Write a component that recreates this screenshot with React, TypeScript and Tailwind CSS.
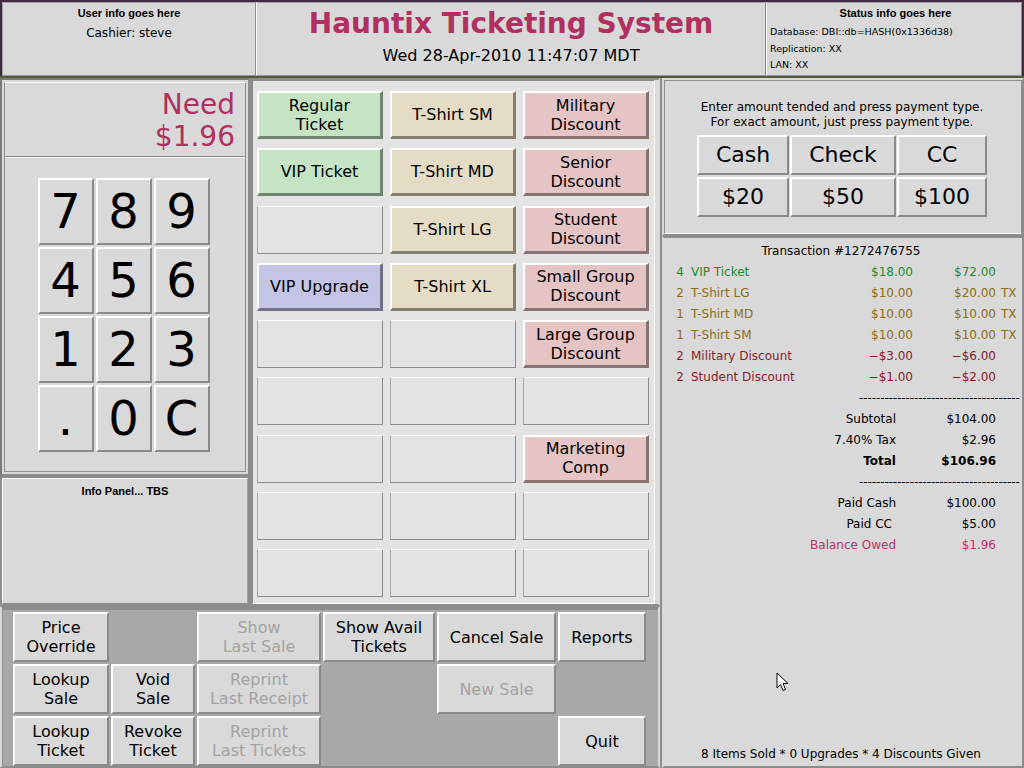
import React from "react";

const keyBtn =
  "flex items-center justify-center bg-[#d9d9d9] border-2 border-t-white border-l-white border-b-[#8a8a8a] border-r-[#8a8a8a]";

type Prod = { label?: string; kind?: "green" | "tan" | "pink" | "blue" };

const products: Prod[][] = [
  [{ label: "Regular\nTicket", kind: "green" }, { label: "T-Shirt SM", kind: "tan" }, { label: "Military\nDiscount", kind: "pink" }],
  [{ label: "VIP Ticket", kind: "green" }, { label: "T-Shirt MD", kind: "tan" }, { label: "Senior\nDiscount", kind: "pink" }],
  [{}, { label: "T-Shirt LG", kind: "tan" }, { label: "Student\nDiscount", kind: "pink" }],
  [{ label: "VIP Upgrade", kind: "blue" }, { label: "T-Shirt XL", kind: "tan" }, { label: "Small Group\nDiscount", kind: "pink" }],
  [{}, {}, { label: "Large Group\nDiscount", kind: "pink" }],
  [{}, {}, {}],
  [{}, {}, { label: "Marketing\nComp", kind: "pink" }],
  [{}, {}, {}],
  [{}, {}, {}],
];

function ProductButton({ p }: { p: Prod }) {
  if (!p.label) {
    return (
      <div className="bg-[#e3e3e3] border border-[#8c8c8c] border-t-white border-l-[#a8a8a8]" />
    );
  }
  const cls =
    p.kind === "green"
      ? "bg-[#c4e4c4] border-b-[#748474] border-r-[#748474]"
      : p.kind === "tan"
      ? "bg-[#e4dcc4] border-b-[#848070] border-r-[#848070]"
      : p.kind === "blue"
      ? "bg-[#c4c4e4] border-b-[#707088] border-r-[#707088]"
      : "bg-[#e4c4c4] border-b-[#887474] border-r-[#887474]";
  return (
    <div
      className={`flex items-center justify-center text-center text-[16px] leading-[19px] whitespace-pre-line border-t-2 border-l-2 border-t-white border-l-white border-b-[3px] border-r-[3px] ${cls}`}
    >
      {p.label}
    </div>
  );
}

type Row = { q: string; name: string; price: string; ext: string; tx: string; color: string };
const rows: Row[] = [
  { q: "4", name: "VIP Ticket", price: "$18.00", ext: "$72.00", tx: "", color: "text-[#1f8b2f]" },
  { q: "2", name: "T-Shirt LG", price: "$10.00", ext: "$20.00", tx: "TX", color: "text-[#8b6d12]" },
  { q: "1", name: "T-Shirt MD", price: "$10.00", ext: "$10.00", tx: "TX", color: "text-[#8b6d12]" },
  { q: "1", name: "T-Shirt SM", price: "$10.00", ext: "$10.00", tx: "TX", color: "text-[#8b6d12]" },
  { q: "2", name: "Military Discount", price: "\u2212$3.00", ext: "\u2212$6.00", tx: "", color: "text-[#8b1a2a]" },
  { q: "2", name: "Student Discount", price: "\u2212$1.00", ext: "\u2212$2.00", tx: "", color: "text-[#8b1a2a]" },
];

const dashes = "-".repeat(38);

function SumRow({ label, value, cls = "", lpad = "" }: { label: string; value: string; cls?: string; lpad?: string }) {
  return (
    <div className={`flex h-[21px] items-center ${cls}`}>
      <div className={`w-[226px] text-right ${lpad}`}>{label}</div>
      <div className="w-[100px] text-right">{value}</div>
    </div>
  );
}

function DashRow() {
  return (
    <div className="flex h-[21px] items-center">
      <div className="ml-[189px] whitespace-nowrap tracking-[-0.1px]">{dashes}</div>
    </div>
  );
}

function FnBtn({ children, disabled = false }: { children?: React.ReactNode; disabled?: boolean }) {
  return (
    <div
      className={`flex items-center justify-center text-center text-[16px] leading-[19px] whitespace-pre-line bg-[#d9d9d9] border-2 border-t-white border-l-white border-b-[#8a8a8a] border-r-[#8a8a8a] ${
        disabled ? "text-[#a3a3a3]" : "text-black"
      }`}
    >
      {children}
    </div>
  );
}

export default function App() {
  return (
    <div className="relative w-[1024px] h-[768px] overflow-hidden bg-[#d9d9d9] font-['DejaVu_Sans',sans-serif] text-black">
      {/* Header */}
      <div className="flex h-[76px] border-t-2 border-l-2 border-r-2 border-[#3c2c3c] bg-[#3c2c3c]">
        <div className="w-[254px] flex flex-col items-center bg-[#d9d9d9] border border-t-[#a8a0a8] border-l-[#a8a0a8] border-b-[#9a909a] border-r-[#8c8c8c] pt-[3px]">
          <div className="font-['Liberation_Sans',sans-serif] font-bold text-[11px] leading-[14px]">User info goes here</div>
          <div className="mt-[5px] text-[12px] leading-[16px]">Cashier: steve</div>
        </div>
        <div className="w-[510px] flex flex-col items-center bg-[#d9d9d9] border border-t-[#a8a0a8] border-l-white border-b-[#9a909a] border-r-[#8c8c8c] pt-[4px]">
          <div className="text-[28px] font-bold leading-[34px] text-[#b03060]">Hauntix Ticketing System</div>
          <div className="mt-[5px] text-[16px] leading-[20px]">Wed 28-Apr-2010 11:47:07 MDT</div>
        </div>
        <div className="flex-1 flex flex-col bg-[#d9d9d9] border border-t-[#a8a0a8] border-l-white border-b-[#9a909a] border-r-[#8c8c8c] pt-[3px] pl-[3px]">
          <div className="text-center font-['Liberation_Sans',sans-serif] font-bold text-[11px] leading-[14px]">Status info goes here</div>
          <div className="mt-[3px] text-[9.5px] leading-[17px]">Database: DBI::db=HASH(0x1336d38)</div>
          <div className="text-[9.5px] leading-[17px]">Replication: XX</div>
          <div className="text-[9.5px] leading-[15px]">LAN: XX</div>
        </div>
      </div>

      {/* Main */}
      <div className="grid grid-cols-[250px_410px_364px] grid-rows-[528px_162px] border-t-2 border-[#55554a]">
        {/* Left column */}
        <div className="flex flex-col">
          <div className="h-[398px] p-[2px] border-2 border-t-[#7a7a7a] border-l-[#7a7a7a] border-b-[#8c8c8c] border-r-[#8c8c8c]">
            <div className="h-full flex flex-col border border-t-white border-l-[#8c8c8c] border-r-[#8c8c8c] border-b-[#8c8c8c] bg-[#d9d9d9]">
              <div className="h-[74px] border-b border-[#8c8c8c] text-right pr-[10px] pt-[6px] text-[28px] leading-[32px] text-[#b03060]">
                <div>Need</div>
                <div>$1.96</div>
              </div>
              <div className="flex-1 border-t border-white flex items-center justify-center pr-[3px]">
                <div className="grid grid-cols-[56px_56px_56px] grid-rows-[67px_67px_67px_67px] gap-[2px] text-[48px] leading-none">
                  {["7", "8", "9", "4", "5", "6", "1", "2", "3", ".", "0", "C"].map((k) => (
                    <div key={k} className={keyBtn}>
                      {k}
                    </div>
                  ))}
                </div>
              </div>
            </div>
          </div>
          <div className="flex-1 border-2 border-t-[#8c8c8c] border-l-[#8c8c8c] border-b-[#8c8c8c] border-r-[#8c8c8c]">
            <div className="h-full border border-t-white border-l-white border-b-[#8c8c8c] border-r-[#a0a0a0] pt-[5px] text-center font-['Liberation_Sans',sans-serif] font-bold text-[11px] leading-[14px]">
              Info Panel... TBS
            </div>
          </div>
        </div>

        {/* Product grid */}
        <div className="border-2 border-t-[#8c8c8c] border-l-[#8c8c8c] border-b-[#8c8c8c] border-r-[#d9d9d9] bg-[#d9d9d9] pr-[3px]">
          <div className="h-full bg-[#e3e3e3] border border-[#8c8c8c] border-r-white border-b-white pl-[4px] pt-[10px]">
            <div className="grid grid-cols-[126px_126px_126px] grid-rows-[48px_48px_48px_48px_48px_48px_48px_48px_48px] gap-x-[7px] gap-y-[9.25px]">
              {products.flat().map((p, i) => (
                <ProductButton key={i} p={p} />
              ))}
            </div>
          </div>
        </div>

        {/* Right column */}
        <div className="row-span-2 flex flex-col border-l-2 border-[#8c8c8c]">
          <div className="h-[158px] border-2 border-t-[#d9d9d9] border-l-[#d9d9d9] border-b-[#8c8c8c] border-r-[#8c8c8c]">
            <div className="h-full border border-[#8c8c8c] border-b-white flex flex-col items-center justify-center pr-[2px]">
              <div className="text-center text-[12px] leading-[15px] mt-[3px]">
                <div>Enter amount tended and press payment type.</div>
                <div>For exact amount, just press payment type.</div>
              </div>
              <div className="mt-[5px] grid grid-cols-[92px_106px_90px] grid-rows-[40px_40px] gap-x-[1px] gap-y-[2px] text-[22px] leading-none">
                {["Cash", "Check", "CC", "$20", "$50", "$100"].map((t) => (
                  <div key={t} className={keyBtn}>
                    {t}
                  </div>
                ))}
              </div>
            </div>
          </div>
          <div className="flex-1 flex flex-col border-2 border-t-[#8c8c8c] border-l-[#d9d9d9] border-b-[#8c8c8c] border-r-[#8c8c8c] text-[12px] pl-[6px] pt-[2px]">
            <div className="h-[21px] flex items-center justify-center pr-[10px]">Transaction #1272476755</div>
            {rows.map((r, i) => (
              <div key={i} className={`flex h-[21px] items-center ${r.color}`}>
                <div className="w-[14px] text-right">{r.q}</div>
                <div className="w-[147px] pl-[7px]">{r.name}</div>
                <div className="w-[82px] text-right">{r.price}</div>
                <div className="w-[83px] text-right">{r.ext}</div>
                <div className="pl-[5px]">{r.tx}</div>
              </div>
            ))}
            <DashRow />
            <SumRow label="Subtotal" value="$104.00" />
            <SumRow label="7.40% Tax" value="$2.96" />
            <SumRow label="Total" value="$106.96" cls="font-bold" />
            <DashRow />
            <SumRow label="Paid Cash" value="$100.00" />
            <SumRow label="Paid CC" value="$5.00" lpad="pr-[4px]" />
            <SumRow label="Balance Owed" value="$1.96" cls="text-[#c0306a]" />
            <div className="mt-auto h-[21px] mb-[2px] flex items-center justify-center pr-[10px]">
              8 Items Sold * 0 Upgrades * 4 Discounts Given
            </div>
          </div>
        </div>

        {/* Bottom buttons */}
        <div className="col-span-2 bg-[#a8a8a8] border-2 border-t-[#8c8c8c] border-l-[#d9d9d9] border-b-[#8c8c8c] border-r-[#d9d9d9]">
          <div className="h-full border-t-2 border-l border-[#8c8c8c] pl-[10px] pt-[2px]">
            <div className="grid grid-cols-[96px_84px_124px_112px_119px_88px] grid-rows-[50px_50px_50px] gap-[2px]">
              <FnBtn>{"Price\nOverride"}</FnBtn>
              <div />
              <FnBtn disabled>{"Show\nLast Sale"}</FnBtn>
              <FnBtn>{"Show Avail\nTickets"}</FnBtn>
              <FnBtn>Cancel Sale</FnBtn>
              <FnBtn>Reports</FnBtn>

              <FnBtn>{"Lookup\nSale"}</FnBtn>
              <FnBtn>{"Void\nSale"}</FnBtn>
              <FnBtn disabled>{"Reprint\nLast Receipt"}</FnBtn>
              <div />
              <FnBtn disabled>New Sale</FnBtn>
              <div />

              <FnBtn>{"Lookup\nTicket"}</FnBtn>
              <FnBtn>{"Revoke\nTicket"}</FnBtn>
              <FnBtn disabled>{"Reprint\nLast Tickets"}</FnBtn>
              <div />
              <div />
              <FnBtn>Quit</FnBtn>
            </div>
          </div>
        </div>
      </div>

      {/* Mouse cursor */}
      <svg className="absolute left-[776px] top-[672px]" width="13" height="21" viewBox="0 0 13 21">
        <path d="M1 1 L1 16 L4.5 12.5 L7 18.5 L9.5 17.5 L7 11.5 L12 11.5 Z" fill="white" stroke="black" strokeWidth="1" strokeLinejoin="round" />
      </svg>
    </div>
  );
}
